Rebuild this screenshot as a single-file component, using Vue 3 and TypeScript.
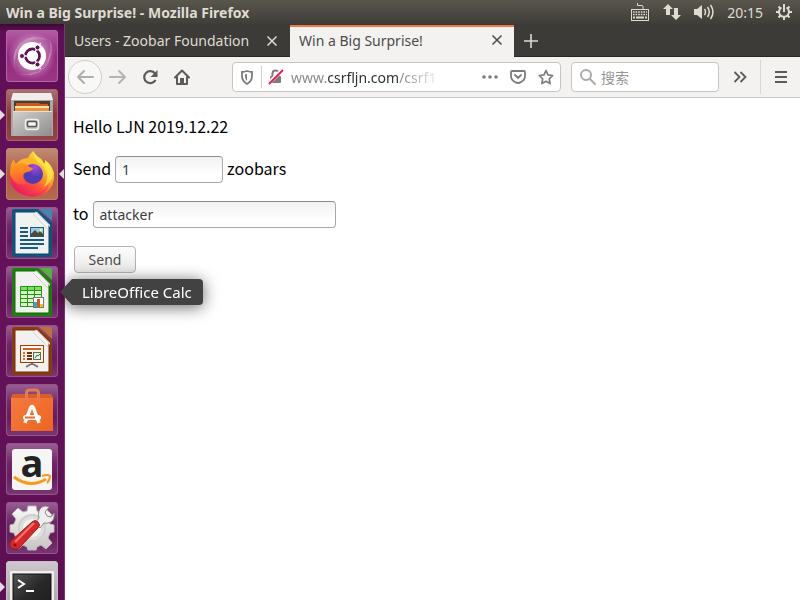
<script setup lang="ts">
import { ref } from 'vue'

interface LauncherItem {
  id: string
  label: string
  running?: boolean
  active?: boolean
  hovered?: boolean
}

const launcher: LauncherItem[] = [
  { id: 'dash', label: 'Search your computer' },
  { id: 'files', label: 'Files', running: true },
  { id: 'firefox', label: 'Firefox Web Browser', running: true, active: true },
  { id: 'writer', label: 'LibreOffice Writer' },
  { id: 'calc', label: 'LibreOffice Calc', hovered: true },
  { id: 'impress', label: 'LibreOffice Impress' },
  { id: 'software', label: 'Ubuntu Software' },
  { id: 'amazon', label: 'Amazon' },
  { id: 'settings', label: 'System Settings' },
  { id: 'terminal', label: 'Terminal', running: true },
]

const officeColors: Record<string, { edge: string; dark: string; fold: string }> = {
  writer: { edge: '#0f567f', dark: '#0b4567', fold: '#3f88b4' },
  calc: { edge: '#1a8209', dark: '#12650a', fold: '#4fb63b' },
  impress: { edge: '#8e3a0b', dark: '#712c06', fold: '#c0703c' },
}

const amount = ref('1')
const recipient = ref('attacker')
const search = ref('')
</script>

<template>
  <div class="desktop">
    <header class="panel">
      <span class="panel-title">Win a Big Surprise! - Mozilla Firefox</span>
      <div class="indicators">
        <svg width="20" height="20" viewBox="0 0 20 20" fill="none">
          <path d="M7.500 1v2.500h4.500q1 0 1 1V7" stroke="#dfdbd2" />
          <rect x="1.500" y="7.500" width="17" height="11" stroke="#dfdbd2" />
          <path d="M3 10h14M3 12.500h14" stroke="#dfdbd2" stroke-width="1.500" stroke-dasharray="1.600 1" />
          <path d="M3 15.500h2M6 15.500h8M15 15.500h2" stroke="#dfdbd2" stroke-width="2" />
        </svg>
        <svg width="18" height="18" viewBox="0 0 18 18" fill="#dfdbd2">
          <path d="M5 1l5 5H7v6H3V6H0zM13 17l-5-5h3V5h4v7h3z" />
        </svg>
        <svg width="20" height="18" viewBox="0 0 20 18" fill="#dfdbd2">
          <path d="M0 6h3l5-4v14l-5-4H0z" />
          <path d="M10.500 6q2 3 0 6M13.500 4q3.500 5 0 10M16.500 2q5 7 0 14" fill="none" stroke="#dfdbd2" stroke-width="1.500" />
        </svg>
        <span class="clock">20:15</span>
        <svg width="16" height="18" viewBox="0 0 16 18" fill="none" stroke="#dfdbd2">
          <path d="M5.500 4.500a5 5 0 1 0 5 0M8 1v8" stroke-width="2" />
          <path d="M2.500 3.500l2 2M13.500 3.500l-2 2M0 9h3M13 9h3M2.500 14.500l2-2M13.500 14.500l-2-2M8 14v3" stroke-width="2" />
        </svg>
      </div>
    </header>

    <div class="workspace">
      <nav class="launcher" aria-label="Launcher">
        <div v-for="item in launcher" :key="item.id" class="slot">
          <span v-if="item.running" class="pip pip-left"></span>
          <button type="button" class="tile" :class="'tile-' + item.id" :aria-label="item.label">
            <svg v-if="item.id === 'dash'" viewBox="0 0 52 52">
              <defs>
                <radialGradient id="dashGlow"><stop offset="0.300" stop-color="#fff" stop-opacity="0.500" /><stop offset="1" stop-color="#fff" stop-opacity="0" /></radialGradient>
              </defs>
              <circle cx="26" cy="26" r="24" fill="url(#dashGlow)" />
              <path d="M10 41Q3 24 16 13 29 3 42 10 25 7 17 16 6 26 10 41M43 8Q51 23 39 35 28 48 12 44 29 46 37 36 47 26 43 8" fill="#fff" opacity="0.180" />
              <path d="M8 29Q9 10 29 7M44 23Q44 41 23 45" fill="none" stroke="#fff" opacity="0.250" />
              <circle cx="26" cy="26" r="14" fill="#fff" />
              <circle cx="26.500" cy="26" r="7" fill="none" stroke="#5e1250" stroke-width="2.800" />
              <path d="M26.500 26H12M26.500 26l8-13M26.500 26l8 13" stroke="#fff" stroke-width="1.400" />
              <circle cx="26.500" cy="26" r="5.500" fill="#fff" />
              <g fill="#5e1250" stroke="#fff"><circle cx="16" cy="26" r="2.500" /><circle cx="31.500" cy="17.500" r="2.500" /><circle cx="31.500" cy="34.500" r="2.500" /></g>
            </svg>

            <svg v-else-if="item.id === 'files'" viewBox="0 0 52 52">
              <defs>
                <linearGradient id="steel" x1="0" y1="0" x2="1" y2="1"><stop offset="0" stop-color="#d2d1cf" /><stop offset="1" stop-color="#8d8c8a" /></linearGradient>
              </defs>
              <path d="M7 4h38l2 7v36H5V11z" fill="#a9a8a5" />
              <path d="M7 4h38l2 7H5z" fill="#eeedec" />
              <path d="M8 12h36v11H8z" fill="#493d38" />
              <path d="M10 14h23l1 1h8v7H10z" fill="#c95b15" />
              <path d="M9 17h34v2H9z" fill="#f8dfb0" /><path d="M9 19h34v3H9z" fill="#ee9337" />
              <path d="M7 22h39v25H7z" fill="url(#steel)" />
              <path d="M7 22.500h39" stroke="#e5e4e2" />
              <rect x="19.500" y="30.500" width="13" height="10" rx="2" fill="#bbb" stroke="#eee" stroke-width="1.500" />
              <rect x="21.500" y="32.500" width="9" height="5" rx="1" fill="#f4f4f4" stroke="#555" stroke-width="1.500" />
            </svg>

            <svg v-else-if="item.id === 'firefox'" viewBox="0 0 52 52">
              <defs>
                <linearGradient id="foxBody" x1="0.850" y1="0.100" x2="0.200" y2="0.900"><stop offset="0" stop-color="#fff14d" /><stop offset="0.350" stop-color="#ffab25" /><stop offset="0.650" stop-color="#ff5139" /><stop offset="1" stop-color="#e91c62" /></linearGradient>
                <radialGradient id="globe" cx="0.600" cy="0.150"><stop offset="0" stop-color="#a948e8" /><stop offset="1" stop-color="#4f3bb3" /></radialGradient>
                <linearGradient id="foxHead" x1="0.300" y1="0" x2="0.400" y2="1"><stop offset="0" stop-color="#ffa51e" /><stop offset="0.500" stop-color="#ff8226" /><stop offset="1" stop-color="#ff4f3c" /></linearGradient>
              </defs>
              <path d="M27 3q3 5 8 8 2 2 3 5 2-2 1-4 7 5 9 13 1 13-8 20-8 5-18 3Q10 46 5 36 1 24 8 12q0 3 2 4 4-4 11-5 3-5 6-8z" fill="url(#foxBody)" />
              <path d="M7 34q4 11 16 12 14 1 20-10-2 10-14 13-15 1-22-15" fill="#f0246a" opacity="0.450" />
              <path d="M27 3q1 9 8 13 7 6 6 16-1 4-4 7 9-4 10-14-2-8-8-13 1 2-1 4-1-3-3-5-5-3-8-8" fill="#fff04a" opacity="0.700" />
              <path d="M10 16q5-6 12-6 5 0 9 3-5 0-8 4z" fill="#ffb52a" />
              <circle cx="27" cy="26" r="10" fill="url(#globe)" />
              <path d="M4 25q0-10 4-14 0 4 3 5 5-2 9 0 2 3 7 4-1 3-6 4-4 1-4 5 0 4 4 7-9 2-13-3-4-4-4-8z" fill="url(#foxHead)" />
            </svg>

            <svg v-else-if="officeColors[item.id]" viewBox="0 0 52 52">
              <path d="M8 2h24l14 14v32q0 2-2 2H8q-2 0-2-2V4q0-2 2-2z" :fill="officeColors[item.id].edge" />
              <path d="M9 5h21l13 13v29H9z" fill="#f1f1f0" :stroke="officeColors[item.id].dark" />
              <path d="M29 5h2l13 13v2z" fill="#fff" />
              <path d="M34 2h10q2 0 2 2v10z" :fill="officeColors[item.id].fold" />
              <path d="M29 4l15 15M27 7l16 16" stroke="#aaa" opacity="0.400" />
              <g v-if="item.id === 'writer'">
                <path d="M14 21h8M14 25h8M14 29h8M14 33h24M14 37h24M14 41h18" stroke="#165b83" stroke-width="2" />
                <rect x="24.500" y="20.500" width="13" height="9" fill="#92cce9" stroke="#165b83" />
                <path d="M25 29v-2l4-4 3 3 2-2 3 3v2z" fill="#514839" /><circle cx="35" cy="23" r="1.500" fill="#fff174" />
              </g>
              <g v-else-if="item.id === 'calc'">
                <path d="M14 20h22v21H14z" fill="#d9f9cc" /><path d="M14 20h22v4H14z" fill="#80df62" />
                <path d="M14.500 20.500h21v20h-21zM14 24.500h22M14 28.500h22M14 32.500h22M14 36.500h22M21.500 20v21M28.500 20v21" fill="none" stroke="#219810" />
                <rect x="27.500" y="31.500" width="10" height="10" fill="#fff" stroke="#777" />
                <path d="M28 36h3v5h-3z" fill="#27a7e3" /><path d="M31 33h3v8h-3z" fill="#df5417" /><path d="M34 38h3v3h-3z" fill="#efc31e" />
              </g>
              <g v-else>
                <rect x="14.500" y="20.500" width="23" height="17" fill="#fff4e9" stroke="#9c410e" />
                <path d="M17 24h18" stroke="#cf6323" stroke-width="2" />
                <path d="M17 28h2M17 31h2M17 34h2" stroke="#e26b2e" stroke-width="2" /><path d="M21 28h5M21 31h5M21 34h5" stroke="#75310e" stroke-width="2" />
                <rect x="27.500" y="27.500" width="7" height="7" fill="#e4f3df" stroke="#666" /><path d="M29 33l2-3 1 1 2-2" fill="none" stroke="#248a23" />
                <path d="M26 38v2M25 39l-5 3M27 39l5 3" stroke="#777" stroke-width="2" />
              </g>
            </svg>

            <svg v-else-if="item.id === 'software'" viewBox="0 0 52 52">
              <defs><linearGradient id="bag" x1="0" y1="0" x2="1" y2="1"><stop offset="0" stop-color="#f47b3f" /><stop offset="1" stop-color="#ee651f" /></linearGradient></defs>
              <path d="M7 10h38l2 4v33H5V14z" fill="url(#bag)" /><path d="M7 10h38l2 4H5z" fill="#d95e29" />
              <path d="M20.500 17V9q0-3 3-3h6q3 0 3 3v8" fill="none" stroke="#e5794f" stroke-width="3" />
              <path d="M19 39l5.500-15q1.500-3 3 0L33 39" fill="none" stroke="#fff" stroke-width="3.500" />
              <rect x="17" y="31" width="18" height="5" rx="2.500" fill="#fff" /><path d="M19 33.500h10" stroke="#ef6b2b" stroke-width="2" />
            </svg>

            <svg v-else-if="item.id === 'amazon'" class="spill" viewBox="0 0 52 52">
              <rect x="6" y="6" width="40" height="41" rx="3" fill="#f5f5f4" />
              <text x="26" y="34" text-anchor="middle" class="amazon-letter">a</text>
              <path d="M8 34q16 12 32 2" fill="none" stroke="#f79a17" stroke-width="3" /><path d="M36 33q6-2 8 0 0 4-3 7" fill="none" stroke="#f79a17" stroke-width="2" />
            </svg>

            <svg v-else-if="item.id === 'settings'" viewBox="0 0 52 52">
              <defs><linearGradient id="gear" x1="0" y1="0" x2="0" y2="1"><stop offset="0" stop-color="#fafafa" /><stop offset="1" stop-color="#c5c4c2" /></linearGradient></defs>
              <path d="M21 9l1-5h8l1 5 4 2 5-4 6 6-4 5 2 4 4 1v7l-4 1-2 5 4 5-6 6-5-4-4 2-1 3h-8l-1-3-4-2-5 4-6-6 4-5-2-5-4-1v-7l4-1 2-5-4-5 6-6 5 4z" fill="url(#gear)" stroke="#bab9b6" />
              <circle cx="26" cy="26" r="13" fill="#dededc" stroke="#d0cfcd" stroke-width="2" /><circle cx="26" cy="26" r="9" fill="#f4f4f3" />
              <path d="M29 21l4-5q-2-7 3-11 4-2 7 0l-4 5 2 4 4 1 3-4q1 6-3 9-4 2-7 1l-4 5z" fill="#eee" stroke="#8e8d8b" />
              <path d="M26 20q3-3 6 0t0 6L14 45q-4 4-8 1t-1-7z" fill="#d62828" stroke="#9e1717" /><path d="M28 21L9 40" stroke="#f27a6c" stroke-width="2" />
              <circle cx="9" cy="43" r="1.500" fill="#7b1616" />
            </svg>

            <svg v-else viewBox="0 0 52 52">
              <defs><linearGradient id="screen" x1="0" y1="0" x2="1" y2="1"><stop offset="0" stop-color="#555" /><stop offset="0.500" stop-color="#292929" /><stop offset="1" stop-color="#1c1c1c" /></linearGradient></defs>
              <rect x="4" y="10" width="44" height="38" rx="1" fill="#f0f0ef" /><rect x="7" y="13" width="38" height="33" fill="url(#screen)" stroke="#111" />
              <path d="M12 19l6 4-6 4M20 30h8" fill="none" stroke="#fff" stroke-width="2" />
            </svg>
          </button>
          <span v-if="item.active" class="pip pip-right"></span>
          <div v-if="item.hovered" class="tooltip" role="tooltip">
            <svg class="tooltip-arrow" width="14" height="26" viewBox="0 0 14 26"><path d="M14 0h-2L0 13l12 13h2z" fill="#424242" /></svg>
            <span>{{ item.label }}</span>
          </div>
        </div>
      </nav>

      <section class="browser">
        <div class="tabs">
          <div class="tab">
            <span class="tab-title">Users - Zoobar Foundation</span>
            <button type="button" class="icon-button" aria-label="Close tab">
              <svg width="12" height="12" viewBox="0 0 12 12"><path d="M1.500 1.500l9 9M10.500 1.500l-9 9" fill="none" stroke="currentColor" stroke-width="1.500" /></svg>
            </button>
          </div>
          <div class="tab tab-selected">
            <span class="tab-title">Win a Big Surprise!</span>
            <button type="button" class="icon-button" aria-label="Close tab">
              <svg width="12" height="12" viewBox="0 0 12 12"><path d="M1.500 1.500l9 9M10.500 1.500l-9 9" fill="none" stroke="currentColor" stroke-width="1.500" /></svg>
            </button>
          </div>
          <button type="button" class="icon-button new-tab" aria-label="New tab">
            <svg width="14" height="14" viewBox="0 0 14 14"><path d="M7 0v14M0 7h14" stroke="currentColor" stroke-width="1.600" /></svg>
          </button>
        </div>

        <div class="toolbar">
          <div class="nav-buttons">
            <button type="button" class="icon-button back" aria-label="Back">
              <svg width="18" height="16" viewBox="0 0 18 16"><path d="M17 8H2M8 2L2 8l6 6" fill="none" stroke="currentColor" stroke-width="2" stroke-linecap="round" stroke-linejoin="round" /></svg>
            </button>
            <button type="button" class="icon-button faded" aria-label="Forward">
              <svg width="18" height="16" viewBox="0 0 18 16"><path d="M1 8h15M10 2l6 6-6 6" fill="none" stroke="currentColor" stroke-width="2" stroke-linecap="round" stroke-linejoin="round" /></svg>
            </button>
            <button type="button" class="icon-button" aria-label="Reload">
              <svg width="18" height="16" viewBox="0 0 18 16"><path d="M14 4.500A6 6 0 1 0 14.500 11" fill="none" stroke="currentColor" stroke-width="2.200" /><path d="M16.500 1v7h-7z" fill="currentColor" /></svg>
            </button>
            <button type="button" class="icon-button" aria-label="Home">
              <svg width="18" height="16" viewBox="0 0 18 16"><path d="M2 8.500l7-7 7 7M4 8v7h10V8" fill="none" stroke="currentColor" stroke-width="2" stroke-linecap="round" stroke-linejoin="round" /><path d="M7 9h4v6H7z" fill="currentColor" /></svg>
            </button>
          </div>

          <div class="address">
            <button type="button" class="icon-button" aria-label="Tracking protection">
              <svg width="14" height="15" viewBox="0 0 14 15"><path d="M7 1q3 1 5 1v4q0 5-5 8-5-3-5-8V2q2 0 5-1z" fill="none" stroke="currentColor" stroke-width="1.800" /><path d="M7 4v7q-2-2-2-5V4.500z" fill="currentColor" /></svg>
            </button>
            <span class="divider"></span>
            <button type="button" class="icon-button" aria-label="Connection is not secure">
              <svg width="16" height="16" viewBox="0 0 16 16"><rect x="2" y="7" width="11" height="7" rx="1" fill="currentColor" /><path d="M4.500 7V4.500q0-3 3-3t3 3V7" fill="none" stroke="currentColor" stroke-width="2" /><path d="M0 15L14 1" stroke="#f8f8f8" stroke-width="4" /><path d="M1 15L15 1" stroke="#f2134f" stroke-width="1.800" /></svg>
            </button>
            <span class="url">www.<b>csrfljn.com</b>/csrf1</span>
            <button type="button" class="icon-button" aria-label="Page actions">
              <svg width="16" height="6" viewBox="0 0 16 6" fill="currentColor"><circle cx="2" cy="3" r="1.800" /><circle cx="8" cy="3" r="1.800" /><circle cx="14" cy="3" r="1.800" /></svg>
            </button>
            <button type="button" class="icon-button" aria-label="Save to Pocket">
              <svg width="16" height="16" viewBox="0 0 16 16"><path d="M2 2h12q1 0 1 1v4q0 4-4 6-3 2-6 0-4-2-4-6V3q0-1 1-1z" fill="none" stroke="currentColor" stroke-width="1.800" /><path d="M5 6l3 3 3-3" fill="none" stroke="currentColor" stroke-width="1.800" stroke-linecap="round" /></svg>
            </button>
            <button type="button" class="icon-button" aria-label="Bookmark this page">
              <svg width="16" height="16" viewBox="0 0 16 16"><path d="M8 1.500l2 4.300 4.700.7-3.400 3.300.8 4.800L8 12.300l-4.100 2.300.8-4.800-3.400-3.300 4.700-.7z" fill="none" stroke="currentColor" stroke-width="1.700" stroke-linejoin="round" /></svg>
            </button>
          </div>

          <label class="search">
            <svg width="18" height="18" viewBox="0 0 18 18"><circle cx="7" cy="7" r="5" fill="none" stroke="#aaa" stroke-width="2" /><path d="M11 11l5 5" stroke="#aaa" stroke-width="2" stroke-linecap="round" /></svg>
            <input v-model="search" type="search" placeholder="搜索" aria-label="搜索" />
          </label>

          <button type="button" class="icon-button overflow" aria-label="More tools">
            <svg width="14" height="12" viewBox="0 0 14 12"><path d="M1.500 1l5 5-5 5M7.500 1l5 5-5 5" fill="none" stroke="currentColor" stroke-width="1.800" /></svg>
          </button>
          <button type="button" class="icon-button menu" aria-label="Open menu">
            <svg width="12" height="12" viewBox="0 0 12 12"><path d="M0 1h12M0 6h12M0 11h12" stroke="currentColor" stroke-width="1.800" /></svg>
          </button>
        </div>

        <main class="page">
          <p>Hello LJN 2019.12.22</p>
          <form @submit.prevent>
            <div class="row">
              <label for="amount">Send</label>
              <input id="amount" v-model="amount" class="field field-short" type="text" />
              <span>zoobars</span>
            </div>
            <div class="row">
              <label for="recipient">to</label>
              <input id="recipient" v-model="recipient" class="field field-long" type="text" />
            </div>
            <button type="submit" class="send">Send</button>
          </form>
        </main>
      </section>
    </div>
  </div>
</template>

<style>
body {
  margin: 0;
}
</style>

<style scoped>
* {
  box-sizing: border-box;
}
.desktop {
  display: flex;
  flex-direction: column;
  height: 100vh;
  overflow: hidden;
  background: #fff;
  font-family: "Noto Sans", "Noto Sans CJK SC", sans-serif;
  font-size: 14px;
}
svg {
  display: block;
}
button {
  padding: 0;
  border: 0;
  background: none;
  font: inherit;
}
.panel {
  display: flex;
  flex: none;
  align-items: center;
  justify-content: space-between;
  height: 24px;
  padding: 0 8px 0 6px;
  background: linear-gradient(#59564d, #3e3d38);
  color: #dfdbd2;
}
.panel-title {
  font-weight: 700;
}
.indicators {
  display: flex;
  align-items: center;
  gap: 13px;
}
.workspace {
  display: flex;
  flex: 1;
  min-height: 0;
}
.launcher {
  position: relative;
  z-index: 2;
  display: flex;
  flex: none;
  flex-direction: column;
  gap: 7px;
  width: 65px;
  padding-top: 6px;
  border-right: 1px solid #7c3573;
  background: linear-gradient(#3e0837, #5f0f55 8px, #65125a 50%, #5c0f52);
}
.slot {
  position: relative;
  display: flex;
  flex: none;
  padding-left: 6px;
}
.tile {
  width: 52px;
  height: 52px;
  border-radius: 4px;
  background: linear-gradient(#9a6294, #71296a 35%, #651b5c 65%, #7b3774);
  box-shadow: inset 0 0 0 1px #90558a;
}
.tile-dash {
  background: linear-gradient(#b25da4, #96287f 50%, #9d3586);
  box-shadow: inset 0 0 0 1px #b365a5;
}
.tile-files {
  background: linear-gradient(#ab7275, #8a3438 50%, #94464b);
  box-shadow: inset 0 0 0 1px #a76568;
}
.tile-firefox {
  background: linear-gradient(#c18d77, #ab5a42 50%, #b46c50);
  box-shadow: inset 0 0 0 1px #c08169;
}
.tile-terminal {
  background: linear-gradient(#cfc8ce, #a69ca5);
  box-shadow: inset 0 0 0 1px #c8c0c7;
}
.spill {
  overflow: visible;
}
.amazon-letter {
  font-family: "Open Sans", sans-serif;
  font-size: 38px;
  font-weight: 700;
  fill: #222;
}
.pip {
  position: absolute;
  top: 21px;
  border: 5px solid transparent;
}
.pip-left {
  left: 0;
  border-right: 0;
  border-left-color: #e4dce3;
}
.pip-right {
  right: 0;
  border-left: 0;
  border-right-color: #e4dce3;
}
.tooltip {
  position: absolute;
  top: 13px;
  left: 60px;
  display: flex;
  align-items: center;
  height: 26px;
  color: #fff;
  font-size: 15px;
  white-space: nowrap;
  filter: drop-shadow(0 2px 8px rgba(0, 0, 0, 0.6));
}
.tooltip span {
  padding: 0 11px 0 8px;
  border-radius: 0 4px 4px 0;
  background: #424242;
  line-height: 26px;
}
.browser {
  display: flex;
  flex: 1;
  flex-direction: column;
  min-width: 0;
}
.tabs {
  display: flex;
  flex: none;
  height: 33px;
  background: #3c3b37;
  box-shadow: inset 0 -1px #292824;
  color: #dfdbd2;
}
.tab {
  display: flex;
  flex: 0 1 225px;
  align-items: center;
  justify-content: space-between;
  padding: 0 12px 0 9px;
}
.tab-selected {
  flex-basis: 224px;
  margin-top: 1px;
  border-top: 2px solid #f27847;
  padding: 0 11px 4px 9px;
  background: #f3f2f1;
  color: #4b4b48;
}
.tab-title {
  overflow: hidden;
  white-space: nowrap;
}
.icon-button {
  display: flex;
  flex: none;
  align-items: center;
  justify-content: center;
  color: inherit;
}
.new-tab {
  width: 34px;
}
.toolbar {
  display: flex;
  flex: none;
  align-items: center;
  height: 41px;
  border-bottom: 1px solid #c8c7c5;
  background: #f3f2f1;
  color: #5b5b5a;
}
.nav-buttons {
  display: flex;
  align-items: center;
  gap: 14px;
  margin: 0 41px 0 3px;
}
.back {
  width: 34px;
  height: 34px;
  margin-right: -7px;
  border: 1px solid #d0cfcd;
  border-radius: 50%;
  background: #f8f8f7;
  color: #b0afad;
}
.faded {
  color: #b5b4b2;
}
.address {
  display: flex;
  flex: 2 1 329px;
  align-items: center;
  min-width: 0;
  height: 30px;
  padding: 0 6px 0 7px;
  border: 1px solid #c6c5c3;
  border-radius: 4px;
  background: #fff;
  color: #7c7c7b;
  gap: 12px;
}
.divider {
  width: 1px;
  height: 22px;
  margin: 0 -6px 0 -5px;
  background: #cfcfcf;
}
.url {
  flex: 1;
  margin-left: -5px;
  margin-right: 28px;
  color: #8c8c8b;
  white-space: nowrap;
  mask-image: linear-gradient(to right, #000 calc(100% - 40px), transparent);
}
.url b {
  color: #2e3436;
  font-weight: 400;
}
.search {
  display: flex;
  flex: 1 1 148px;
  align-items: center;
  min-width: 0;
  height: 30px;
  margin-left: 10px;
  padding-left: 7px;
  border: 1px solid #c6c5c3;
  border-radius: 4px;
  background: #fff;
  gap: 4px;
}
.search input {
  flex: 1;
  min-width: 0;
  padding: 0;
  border: 0;
  outline: 0;
  background: none;
  font: inherit;
}
.search input::placeholder {
  color: #969696;
}
.overflow {
  width: 41px;
}
.menu {
  width: 40px;
  height: 34px;
  border-left: 1px solid #d8d7d5;
}
.page {
  flex: 1;
  padding: 16px 8px;
  color: #000;
  font-family: "Noto Sans CJK SC", sans-serif;
  font-size: 16px;
  line-height: 24px;
}
.page p {
  margin: 0 0 18px;
}
.row {
  display: flex;
  align-items: baseline;
  gap: 4px;
  margin-bottom: 18px;
}
.field {
  height: 27px;
  padding: 0 6px;
  border: 1px solid #a9a8a6;
  border-top-color: #8d8c8a;
  border-radius: 4px;
  background: linear-gradient(#f1f1f1, #fff 70%);
  color: #3c3c3c;
  font-family: "Noto Sans", sans-serif;
  font-size: 14px;
}
.field-short {
  width: 108px;
}
.field-long {
  width: 243px;
}
.send {
  display: block;
  width: 62px;
  height: 27px;
  margin-left: 1px;
  border: 1px solid #b3b2b0;
  border-radius: 4px;
  background: linear-gradient(#fdfdfd, #e9e8e7);
  color: #4c4c4c;
  font-family: "Noto Sans", sans-serif;
  font-size: 14px;
}
</style>
